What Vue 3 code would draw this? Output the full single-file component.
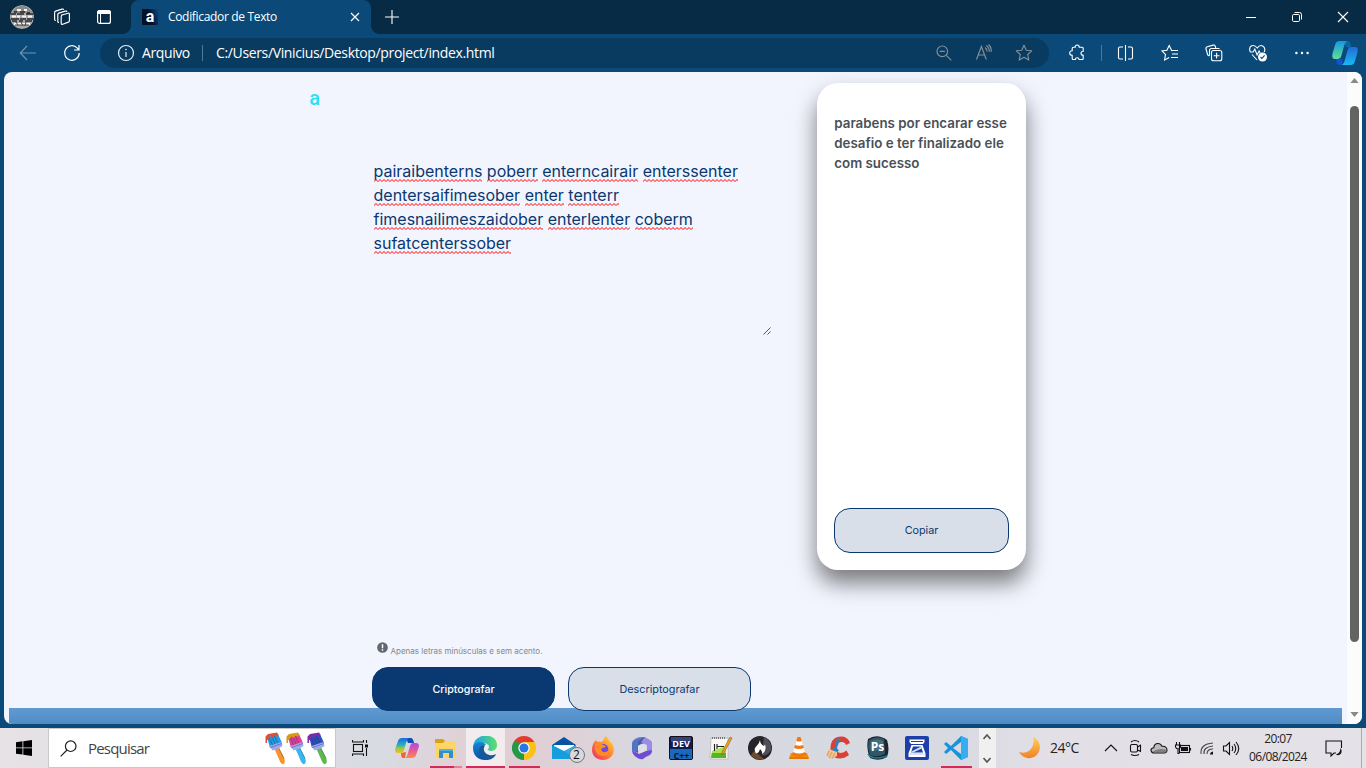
<script setup>
const lines = [
  ['pairaibenterns', 'poberr', 'enterncairair', 'enterssenter'],
  ['dentersaifimesober', 'enter', 'tenterr'],
  ['fimesnailimeszaidober', 'enterlenter', 'coberm'],
  ['sufatcenterssober'],
]
const brushes = [
  { cap: '#dd5038', hair: '#209ee4', stick: '#fb932b' },
  { cap: '#d99b13', hair: '#df3f94', stick: '#36b7f0' },
  { cap: '#7d2aa6', hair: '#2b50bd', stick: '#5db94b' },
]
</script>

<template>
  <div class="screen">
    <header class="tabs">
      <div class="tabs-left">
        <svg class="avatar" viewBox="0 0 24 24" width="24" height="24">
          <circle cx="12" cy="12" r="12" fill="#a9a9a9" />
          <path d="M2 7Q12-6 22 7L20 8H4Z" fill="#8a8a8a" />
          <path d="M1 9h5m1 0h7m2 0h7M4 7h3m3 0h5m2 1h3M1 14h8m1 0h6m1 0h7M2 16h5m2 0h4m2 0h7" stroke="#292929" stroke-width="1.4" />
          <path d="M2 11.5h4m1 0h3m2 0h4m2 0h4M4 19h16M7 5h4m3 0h3" stroke="#f5f5f5" stroke-width="1.8" />
          <path d="M5 20h14M6 17l2 3m3-3 2 4m3-4-1 4" stroke="#444" />
        </svg>
        <svg class="spaces" viewBox="0 0 18 18" width="18" height="18" fill="none" stroke="#fff" stroke-width="1.15" stroke-linejoin="round">
          <path d="M8 7.2 15 5.2q1.4-.3 1.4 1v6.5q0 1-1 1.4l-5.7 2.1q-1.5.5-1.5-1V8.5q0-1 1-1.3" />
          <path d="M6 14.4q-1.2.2-1.2-1V6.5q0-1 1-1.4l6.4-2q1.5-.4 1.6.9" />
          <path d="M2.8 12.3q-1.2.2-1.2-1V4.5q0-1 1-1.4L9 1.1q1.3-.4 1.6.8" />
        </svg>
        <svg class="tabmenu" viewBox="0 0 16 16" width="16" height="16">
          <rect x="1.6" y="1.6" width="12.8" height="12.8" rx="2" fill="none" stroke="#fff" stroke-width="1.2" />
          <path d="M1 4q0-3 3-3h8q3 0 3 3v1H1Z" fill="#fff" /><path d="M4.5 5v9" stroke="#fff" />
        </svg>
      </div>
      <div class="tab">
        <span class="favicon">a</span>
        <span class="tab-title">Codificador de Texto</span>
        <svg viewBox="0 0 10 10" width="10" height="10" stroke="#fff" stroke-width="1.2"><path d="m1 1 8 8M9 1 1 9" /></svg>
      </div>
      <svg class="newtab" viewBox="0 0 14 14" width="14" height="14" stroke="#fff" stroke-width="1.1"><path d="M7 0v14M0 7h14" /></svg>
      <div class="window">
        <svg viewBox="0 0 12 12" stroke="#fff"><path d="M1 6.5h10" /></svg>
        <svg viewBox="0 0 12 12" fill="none" stroke="#fff"><rect x="1.5" y="3.5" width="7" height="7" rx="1.2" /><path d="M3.5 1.5h5q2 0 2 2v5" /></svg>
        <svg viewBox="0 0 12 12" stroke="#fff" stroke-width="1.1"><path d="m1 1 10 10M11 1 1 11" /></svg>
      </div>
    </header>

    <nav class="toolbar">
      <svg class="back" viewBox="0 0 18 18" width="18" height="18" fill="none" stroke="#6c93b0" stroke-width="1.2"><path d="M17 9H1.5M8 2 1.3 9 8 16" /></svg>
      <svg class="reload" viewBox="0 0 18 18" width="18" height="18" fill="none" stroke="#fff" stroke-width="1.2"><path d="M16.2 9A7.3 7.3 0 1 1 14.3 4.1L16 6M16 1v5h-5" /></svg>
      <div class="address">
        <svg viewBox="0 0 18 18" width="18" height="18" fill="none" stroke="#e6eef4" stroke-width="1.2"><circle cx="9" cy="9" r="7.5" /><path d="M9 8v5" /><circle cx="9" cy="5.5" r=".5" fill="#fff" stroke-width=".6" /></svg>
        <span class="scheme">Arquivo</span>
        <i class="rule"></i>
        <span class="url">C:/Users/Vinicius/Desktop/project/index.html</span>
        <div class="address-tools">
          <svg viewBox="0 0 18 18" fill="none" stroke="#829099" stroke-width="1.15"><circle cx="7.3" cy="7.3" r="5.3" /><path d="M4.7 7.3h5.2M11.3 11.3l5 5" /></svg>
          <svg viewBox="0 0 18 18" fill="none" stroke="#829099" stroke-width="1.15"><path d="m1.5 15.5 4.9-13 4.9 13M3.2 11h6.4M10 3.5q2.2 1.2 2 4M11.2 1.5q3.4 2 3 6.3M13.5.5q3.4 3 2.5 7.5" /></svg>
          <svg viewBox="0 0 18 18" fill="none" stroke="#829099" stroke-width="1.15" stroke-linejoin="round"><path d="m9 1.2 2.3 5 5.4.6-4 3.7 1.1 5.6L9 13.3l-4.8 2.8 1.1-5.6-4-3.7 5.4-.6Z" /></svg>
        </div>
      </div>
      <div class="tools">
        <svg viewBox="0 0 18 18"><path d="M5.2 3.2h2q0-2.2 2-2.2t2 2.200h3q1 0 1 1v3q-2.200 0-2.200 2t2.200 2v3.300q0 1-1 1h-3.200q0-1.800-1.800-1.800t-1.800 1.800H5.200q-1 0-1-1v-3.200Q1.700 11.300 1.700 9t2.500-2.200V4.200q0-1 1-1Z" /></svg>
        <i class="rule"></i>
        <svg viewBox="0 0 18 18"><path d="M8.5 1v16M6 3H3Q1.500 3 1.500 4.500v9Q1.500 15 3 15h3m5-12h3q1.500 0 1.500 1.500v9Q15.500 15 14 15h-3" /></svg>
        <svg viewBox="0 0 18 18"><path d="M10.500 6.200 8.200 1.500 5.900 6.200l-5 .7 3.600 3.500L3.600 16l4.600-2.600M10 6.500h7M11 10h6M10 13.500h7" /></svg>
        <svg viewBox="0 0 18 18"><rect x="6.500" y="6.500" width="10.300" height="10.300" rx="2" /><path d="M11.600 8.800v5.700M8.800 11.700h5.700M4.500 11.500Q3 12 2.600 10.500L1 5Q.6 3.200 2.200 2.700l6-1.600q1.500-.4 2 1l.6 2M4.500 11.500v-5q0-2 2-2h8" /></svg>
        <svg viewBox="0 0 18 18"><path d="M1.300 8Q-.4 3.800 2.200 2 5.500.5 8.300 4q2.500-3.500 5.400-2Q17 4 15.200 8M1.200 8h3l1.600-3 2.300 6 2-4 1 2M3 10.500l5 5.500" /><circle cx="13.500" cy="13" r="4.500" fill="#fff" stroke="none" /><path d="m11.500 13 1.400 1.400 2.700-3" stroke="#0b4a78" /></svg>
        <svg viewBox="0 0 18 18"><g fill="#fff" stroke="none"><circle cx="3.400" cy="9" r="1.200" /><circle cx="9" cy="9" r="1.200" /><circle cx="14.600" cy="9" r="1.200" /></g></svg>
      </div>
      <svg class="copilot" viewBox="0 0 24 24" width="26" height="26">
        <defs>
          <linearGradient id="cpa" x2="0" y2="1"><stop stop-color="#1597e4" /><stop offset="1" stop-color="#62df91" /></linearGradient>
          <linearGradient id="cpb" x2="0" y2="1"><stop stop-color="#236bd4" /><stop offset="1" stop-color="#16b9f5" /></linearGradient>
        </defs>
        <path d="M9 1h5q3 0 3 3l1 3h-4Z" fill="#0967a3" />
        <path d="m8 17 2 2-1 4H7q-3 0-3-4l-1-2Z" fill="#1650d6" />
        <path d="M7 1h7q-2 1-3 5L8.500 15q-.7 2.500-3 2.500H2.500q-3 0-2-5L3 4q1-3 4-3Z" fill="url(#cpa)" />
        <path d="M17 23h-8q2-1 3-5l2.500-9q.7-2.500 3-2.500h4q3 0 2 5L21 20q-1 3-4 3Z" fill="url(#cpb)" />
      </svg>
    </nav>

    <main class="viewport">
      <div class="page">
        <section class="editor">
          <div class="logo"><span>a</span></div>
          <div class="textarea">
            <p v-for="(line, i) in lines" :key="i"><template v-for="(w, j) in line" :key="w"><span class="misspelt">{{ w }}</span>{{ j < line.length - 1 ? ' ' : '' }}</template></p>
            <svg class="grip" viewBox="0 0 8 8" width="8" height="8" stroke="#444" stroke-width=".9"><path d="m.5 7.500 7-7M4.500 7.500l3-3" /></svg>
          </div>
          <div class="note">
            <svg viewBox="0 0 12 12" width="11" height="11"><circle cx="6" cy="6" r="5.800" fill="#60676f" /><path d="M6 2.500v4.300M6 8v1.500" stroke="#fff" stroke-width="1.600" /></svg>
            <span>Apenas letras minúsculas e sem acento.</span>
          </div>
          <div class="buttons"><button class="btn primary">Criptografar</button><button class="btn">Descriptografar</button></div>
        </section>
        <aside class="card">
          <p>parabens por encarar esse<br />desafio e ter finalizado ele<br />com sucesso</p>
          <button class="btn">Copiar</button>
        </aside>
        <div class="strip"></div>
      </div>
      <div class="scrollbar">
        <svg viewBox="0 0 10 6" width="9" height="5"><path d="M5 0l5 6H0Z" fill="#898989" /></svg>
        <i class="thumb"></i>
        <svg viewBox="0 0 10 6" width="9" height="5"><path d="M0 0h10L5 6Z" fill="#898989" /></svg>
      </div>
    </main>

    <footer class="taskbar">
      <div class="start"><svg viewBox="0 0 16 16" width="16" height="16"><path d="M0 2.300 6.500 1.300v6.200H0ZM7.300 1.200 16 0v7.500H7.300ZM0 8.300h6.500v6.300L0 13.700ZM7.300 8.300H16V16l-8.700-1.300Z" /></svg></div>
      <div class="search">
        <svg viewBox="0 0 17 17" width="17" height="17" fill="none" stroke="#222" stroke-width="1.200"><circle cx="10.700" cy="6.200" r="5.300" /><path d="m7 10-6.300 6.300" /></svg>
        <span>Pesquisar</span>
        <div class="brushes">
          <svg v-for="b in brushes" :key="b.cap" viewBox="0 0 21 33" width="21" height="33">
            <path d="m9.500 17 4.500-1.500q1 3 4 8 3 6 1 8t-4-2q-3-7-5.500-12.500Z" :fill="b.stick" />
            <path d="m14 16.500 5 10" stroke="#293045" stroke-width=".8" opacity=".45" />
            <path d="m2 5 11-3 4 9-12 5Z" :fill="b.hair" />
            <path d="m4.500 6 3 7m-.5-8 3 7m-.5-8 3 7" stroke="#252b65" stroke-width=".7" opacity=".6" />
            <path d="M.5 11V4.500L3 2l9-1.500 1.500 2.200-2 2-2-1-2 2.200L5.500 4 3 8H2v3Z" :fill="b.cap" />
            <path d="m4.500 14 12-4 1 4-4 2.500-6 2Z" fill="#9ba9ed" /><path d="m5.500 15.500 11.500-4" stroke="#56639f" stroke-width=".7" />
          </svg>
        </div>
      </div>
      <div class="taskview"><svg viewBox="0 0 16 16" width="16" height="16" fill="none" stroke="#111" stroke-width="1.100"><rect x="1.500" y="4.500" width="9" height="7" /><path d="M.5 0v2h11V0M.5 16v-2h11v2M14.500 0v3M14.500 8v8" /><path d="M13 4.500h3v3h-3Z" fill="#111" stroke="none" /></svg></div>

      <div class="apps">
        <div class="app"><svg viewBox="0 0 24 24">
          <defs><linearGradient id="k1" x2="0" y2="1"><stop stop-color="#176be4" /><stop offset=".45" stop-color="#27aebd" /><stop offset=".7" stop-color="#9dc846" /><stop offset="1" stop-color="#f8bd18" /></linearGradient><linearGradient id="k2" x2="0" y2="1"><stop stop-color="#a34de9" /><stop offset=".5" stop-color="#e85998" /><stop offset="1" stop-color="#fb8b4c" /></linearGradient></defs>
          <path d="M11 2h5q2 0 3 5h-6Z" fill="#1549b5" /><path d="m6 17 5-1-1 6H8q-2 0-2-5Z" fill="#f1662f" />
          <path d="M7 2h7q-2 1-3 5l-2 7q-.8 3-3 3H3q-4 0-2.500-5L3 5q1-3 4-3Z" fill="url(#k1)" /><path d="M17 22h-7q2-1 3-5l2-7q.8-3 3-3h3q4 0 2.500 5L21 19q-1 3-4 3Z" fill="url(#k2)" /></svg></div>
        <div class="app run folder"><svg viewBox="0 0 24 24"><path d="M1 3h8l2 2h11v7H1Z" fill="#d9a019" /><path d="M1 7h8l2-2h11v16H1Z" fill="#fed465" /><path d="M5 13h14v9h-4v-5H9v5H5Z" fill="#328dc9" /><path d="M5 13h14v2H5Z" fill="#54b1e6" /></svg></div>
        <div class="app run active"><svg viewBox="0 0 24 24">
          <defs><linearGradient id="e1"><stop stop-color="#16a1ed" /><stop offset="1" stop-color="#5be06a" /></linearGradient><linearGradient id="e2" x2="0" y2="1"><stop stop-color="#1687d1" /><stop offset="1" stop-color="#0c51a2" /></linearGradient></defs>
          <path d="M0 12C0-4 24-4 24 9c0 6-6 7-9 5-1-1 1-1 1-3 0-5-11-5-16 1Z" fill="url(#e1)" /><path d="M0 12c1-7 10-8 13-3-6-1-5 10 1 11 4 1 6-1 9-2C16 28 0 25 0 12Z" fill="url(#e2)" /><path d="M12 9.500c-6-2-9 9-1 14 6 1.500 10-1.500 12-5-8 3-15-3-11-9Z" fill="#145999" /></svg></div>
        <div class="app run chrome"><svg viewBox="0 0 24 24"><path d="M12 12 1.600 6A12 12 0 0 1 22.400 6Z" fill="#e33b2e" /><path d="M12 12 22.400 6A12 12 0 0 1 12 24Z" fill="#fbc116" /><path d="M12 12v12A12 12 0 0 1 1.600 6Z" fill="#279847" /><path d="M12 6h10.400L17 15l-5 9 5-9Z" fill="#fbc116" /><path d="M1.600 6 7 15l5 3V7Z" fill="#279847" /><circle cx="12" cy="12" r="5.700" fill="#fff" /><circle cx="12" cy="12" r="4.500" fill="#2775e7" /></svg></div>
        <div class="app mail"><svg viewBox="0 0 24 24"><path d="M0 9 12 1l12 8v14H0Z" fill="#0754a5" /><path d="M2 9h20v6l-10 4-10-4Z" fill="#fff" /><path d="m0 9 12 6 12-6v14H0Z" fill="#159ddd" /><path d="m12 15 12-6v14Z" fill="#50baf0" opacity=".5" /></svg><b>2</b></div>
        <div class="app"><svg viewBox="0 0 24 24"><defs><linearGradient id="ff" x1="1" x2="0" y2="1"><stop stop-color="#ffe635" /><stop offset=".5" stop-color="#ff8232" /><stop offset="1" stop-color="#ec2571" /></linearGradient></defs><path d="M14 0q4 2 4 5 4 2 5 8c0 15-22 14-22 1 0-4 1-7 4-10l1 2q2-1 4 0 3-1 4-6Z" fill="url(#ff)" /><circle cx="12" cy="13" r="5.300" fill="#7749d7" /><path d="M4 8q4-3 8 1l3 1q-1 2-4 2-2 2 1 4 4 1 6-3 0 8-7 7-8-1-7-12Z" fill="#ff8d24" /></svg></div>
        <div class="app"><svg viewBox="0 0 24 24"><path d="M9 2 14 1l7 4v5l-7-3-6 4v6l-6-3V8q0-4 7-6Z" fill="#465ca6" /><path d="m15 1 7 5v10q0 3-6 5v-5l1-1V9l-6-3Z" fill="#9c8be3" /><path d="m2 14 7 4 7-3 6-1q0 4-5 6l-4 3q-3 1-7-2-4-3-4-7Z" fill="#704ad0" /><path d="M2 13V8q0-5 7-7l5 0-6 5v8l-4 3Z" fill="#587fcf" opacity=".7" /><path d="m12 7.500 4 2.300v4.500l-4 2.300-4-2.300V9.800Z" fill="#dedfe8" /></svg></div>
        <div class="app"><svg viewBox="0 0 24 24"><rect x=".5" y=".5" width="23" height="23" rx="1.500" fill="#101b54" stroke="#111" /><path d="M1 13h22v10H1Z" fill="#1969bd" /><path d="M2 1h20v5H2Z" fill="#38417b" /><text x="12" y="11" text-anchor="middle" class="g dev" fill="#fff">DEV</text><text x="12.500" y="22.500" text-anchor="middle" class="g cpp">C++</text></svg></div>
        <div class="app"><svg viewBox="0 0 24 24"><path d="M2 2h17v21H1Z" fill="#f7f8f2" stroke="#aaa" stroke-width=".6" /><path d="M3 15 17 10v11H2Z" fill="#a8e44c" /><path d="M3 17h14v5H2Z" fill="#54b721" /><path d="M3 2h14" stroke="#777" stroke-width="2" stroke-dasharray="1 1" /><path d="M5.500 8v7M8 8v5m0-2.500h7" stroke="#222" stroke-width="1.100" /><path d="m21 1 2 1-8 15-2 2v-3Z" fill="#eba51f" stroke="#754b17" stroke-width=".5" /></svg></div>
        <div class="app"><svg viewBox="0 0 24 24"><circle cx="12" cy="12" r="12" fill="#272529" /><path d="M16 1a12 12 0 0 1 7 13q-4 7-9 5Z" fill="#505158" /><path d="M3 19q5 6 13 4L6 15Z" fill="#936033" opacity=".65" /><path d="M12 4q0 4 4 6l1-1.500q2 6-2.500 9.500 0-3-2.500-5-1 4-4 4.500-3-4.500 1-8 2.500-2.500 3-5.500Z" fill="#fff" /></svg></div>
        <div class="app"><svg viewBox="0 0 24 24"><path d="m4 17-2 5v1h20v-1l-2-5Z" fill="#f28d12" /><path d="M10.500 1h3L19 19q-7 4-14 0Z" fill="#ef7812" /><path d="m9.300 5-1.200 4q4 1.500 8 0l-1.200-4Q12 6 9.300 5ZM7 12l-1 4q6 3 12 0l-1-4q-5 2-10 0Z" fill="#fff" /><path d="M3 22h18" stroke="#d36500" /></svg></div>
        <div class="app"><svg viewBox="0 0 24 24"><path d="M24 7q-2-6-8-6.500Q7 0 5 8q-2 9 3 13 7 4 15-2l-2.500-4.500q-4 3.500-8 2-3-2-2-7 2-4 6-3.500 3 .5 3.500 3Z" fill="#dc3f35" /><path d="m11 2 3 1-3 9 2 3-6 2-1-4 3-2Z" fill="#2e83bf" /><path d="m3 13 8 3v4l-7 3-4-4Z" fill="#f4c28c" /><path d="m3 15-2 5m5-4-3 6m6-5-3 6" stroke="#a88a65" stroke-width=".600" /></svg></div>
        <div class="app"><svg viewBox="0 0 24 24"><path d="M2 3q9-6 19 1 3 9 0 17-8 5-17 1Q0 14 2 3Z" fill="#20232a" /><path d="M3 4q8-5 15-1l1 15q-8 4-15 1-3-8-1-15Z" fill="#315668" /><path d="M5 5q7-3 12 0l1 8q-6 3-14 0Z" fill="#4f7e8d" opacity=".6" /><path d="M2 18q5 7 19 2" stroke="#187e96" fill="none" stroke-width="1.500" /><text x="11.500" y="14.500" text-anchor="middle" class="g ps" fill="#fff">Ps</text></svg></div>
        <div class="app"><svg viewBox="0 0 24 24"><rect width="24" height="24" rx="2" fill="#1e3fa7" /><path d="M4.500 3.500h15V6L18 8H6L4.500 6Z" fill="#fff" /><path d="M6 5h12v1H6Z" fill="#1e3fa7" /><path d="M6.500 9h11l3 8.500V21h-17v-3.500Z" fill="#fff" /><path d="M8 10.500h8l2 6H6Z" fill="#1e3fa7" /><path d="m16 10.500.8 2L8 16.500H6l.4-1Z" fill="#d5e3f8" /><path d="M4.500 18h15" stroke="#9aaede" stroke-width=".7" /></svg></div>
        <div class="app run code"><svg viewBox="0 0 24 24"><path d="m0 8 2-2 5 4L17 0l7 3v18l-7 3L7 14l-5 4-2-2 4-4Z" fill="#1693dd" /><path d="M17 0v24l7-3V3Z" fill="#36adf0" /><path d="m17 6-8 6 8 6Z" fill="#d8dae2" /></svg></div>
      </div>
      <div class="scroller"><svg viewBox="0 0 8 6" width="8" height="6"><path d="m.5 5 3.500-4 3.500 4" /></svg><svg viewBox="0 0 8 6" width="8" height="6"><path d="m.5 1 3.500 4 3.500-4" /></svg></div>
      <div class="weather"><svg viewBox="0 0 24 24" width="24" height="24"><defs><linearGradient id="mn" x2="0" y2="1"><stop stop-color="#ffd159" /><stop offset="1" stop-color="#f0802a" /></linearGradient></defs><path d="M15 1a11 11 0 1 1-14 15Q8 18 12 14q5-5 3-13Z" fill="url(#mn)" /></svg><span>24°C</span></div>
      <div class="tray">
        <svg viewBox="0 0 18 18"><path d="m3 12 6-6 6 6" /></svg>
        <svg viewBox="0 0 18 18"><rect x="4.500" y="5.500" width="7" height="7.500" rx="1.500" /><path d="m11.500 8 3-1.700v6L11.500 11M5 3q4-3 8 0M5 15.500q4 2 8 0" /></svg>
        <svg viewBox="0 0 18 18"><path d="M4.500 14Q1 14 1 11q0-2 2.800-2.300Q4 4.500 8 4.500q2.600 0 4 2.800Q17 7 17 11q0 3-3 3Z" fill="#bbb" /><path d="M2 13q7-5 15-2v3H5Z" fill="#666" stroke="none" opacity=".7" /></svg>
        <svg viewBox="0 0 18 18"><rect x="5.500" y="6.500" width="10" height="7" /><path d="M7 8h7v4H7Z" fill="#111" stroke="none" /><path d="M16.500 9v2.500M2.500 3v3m3-3v3M1.500 6h5v2q-1 2-2.500 2T1.500 8ZM4 10v4.500h1.500" /></svg>
        <svg viewBox="0 0 18 18"><path d="M3 15Q2 5 15 4M6 15Q5 8 15 7M9 15q0-5 6-5" opacity=".75" /><path d="M12 15.500q0-2.500 3-3v3Z" fill="#111" stroke="none" /></svg>
        <svg viewBox="0 0 18 18"><path d="M1.500 7H4l3.500-3.500v12L4 12H1.500ZM10 7q1.500 2.300 0 5M12 5q3.500 4.300 0 9M14 3q5.500 6.300 0 13" /></svg>
      </div>
      <div class="clock"><span>20:07</span><span class="date">06/08/2024</span></div>
      <svg class="notice" viewBox="0 0 18 18" width="18" height="18" fill="none" stroke="#111" stroke-width="1.100"><path d="M16.500 9V2H1v12h5v3l3-3h2" /><path d="M15.500 9q2.500 4-.5 6.500-2.500 1.800-4-.5 4 0 4.500-6Z" fill="#111" stroke="none" /></svg>
      <i class="edge"></i>
    </footer>
  </div>
</template>

<style>
html, body { margin: 0; overflow: hidden; }
</style>

<style scoped>
* { box-sizing: border-box; }
svg { display: block; flex: none; }
.screen { width: 1366px; height: 768px; overflow: hidden; display: flex; flex-direction: column; background: #0b4a78; font-family: "Open Sans", "Noto Sans", sans-serif; color: #fff; white-space: nowrap; }
.tabs { height: 34px; background: #082b45; display: flex; align-items: center; flex: none; }
.tabs-left { width: 131px; height: 34px; display: flex; align-items: center; padding-left: 10px; }
.spaces { margin-left: 19px; }
.tabmenu { margin-left: 25px; }
.avatar { border-radius: 50%; }
.tab { position: relative; width: 240px; height: 34px; background: #0b4a78; border-radius: 8px 8px 0 0; display: flex; align-items: center; padding: 0 11px; }
.tab::before, .tab::after { content: ''; position: absolute; bottom: 0; width: 8px; height: 8px; }
.tab::before { left: -8px; background: radial-gradient(circle at 0 0, transparent 7.5px, #0b4a78 8px); }
.tab::after { right: -8px; background: radial-gradient(circle at 100% 0, transparent 7.5px, #0b4a78 8px); }
.favicon { width: 16px; height: 16px; background: linear-gradient(70deg, #051123 50%, #07488c); font: bold 16px/15px Roboto, sans-serif; text-align: center; }
.tab-title { font-size: 12px; line-height: 16px; margin-left: 10px; letter-spacing: -.33px; margin-right: auto; padding-bottom: 1px; }
.newtab { margin-left: 14px; }
.window { margin-left: auto; display: flex; gap: 34px; padding-right: 17px; }
.window svg { width: 12px; height: 12px; }
.toolbar { height: 38px; flex: none; display: flex; align-items: center; }
.back { margin-left: 19px; }
.reload { margin-left: 26px; }
.address { margin-left: 19px; width: 949px; height: 30px; border-radius: 15px; background: #093b60; display: flex; align-items: center; padding-left: 17px; font-size: 14px; }
.scheme { margin-left: 7px; width: 49px; letter-spacing: -.4px; padding-bottom: 2px; }
.rule { width: 1px; height: 16px; background: #4d7896; flex: none; }
.address .rule { margin: 0 13px 0 11px; }
.url { letter-spacing: -.36px; padding-bottom: 2px; }
.address-tools { margin-left: auto; display: flex; gap: 22px; padding-right: 16px; }
.address-tools svg { width: 18px; height: 18px; }
.tools { display: flex; align-items: center; margin-left: 19px; }
.tools svg { width: 18px; height: 18px; margin-right: 26px; fill: none; stroke: #fff; stroke-width: 1.1; }
.tools svg:first-child { margin-right: 15px; }
.tools .rule { margin-right: 15px; }
.copilot { margin-left: -5.5px; }
.viewport { margin: 0 4px; height: 652px; flex: none; border-radius: 8px; overflow: hidden; display: flex; background: #f2f5fe; font-family: Inter, sans-serif; }
.page { width: 1343px; height: 652px; display: grid; grid-template-columns: 813px 209px; grid-template-rows: 636px 16px; }
.editor { z-index: 1; display: flex; flex-direction: column; }
.editor > * { flex: none; }
.logo { margin: 14px 0 0 305px; height: 24px; font: 500 21px/24px Roboto, sans-serif; color: #2be0f6; }
.logo span { display: inline-block; transform: scaleX(.95); }
.textarea { position: relative; margin: 49px 0 0 369.5px; width: 397px; height: 177px; color: #0a3871; font-size: 16px; line-height: 24px; }
.textarea p { margin: 0; }
.misspelt { padding-bottom: 1px; background: url("data:image/svg+xml,%3Csvg xmlns='http://www.w3.org/2000/svg' width='4' height='3'%3E%3Cpath d='M-1 3.5 2 .5 5 3.5' fill='none' stroke='%23fb5f66' stroke-width='1.1'/%3E%3C/svg%3E") 0 100% repeat-x; }
.grip { position: absolute; right: 0; bottom: 1px; }
.note { margin: 306px 0 0 373px; height: 15px; display: flex; gap: 2.5px; color: #83878e; font-size: 8px; line-height: 18px; }
.buttons { margin: 10px 0 0 368px; display: flex; gap: 13px; }
.btn { flex: none; width: 183px; height: 44px; border-radius: 16px; border: 1px solid #0a3871; background: #d8dfe8; color: #0a3871; font: 10.8px Inter, sans-serif; padding: 0; }
.btn.primary { background: #0a3871; color: #fff; font-weight: 500; font-size: 10.7px; }
.card { margin-top: 11px; height: 487px; border-radius: 21px; background: #fff; box-shadow: 0 13px 22px rgba(0, 0, 0, .5); padding: 30px 17px 17px; display: flex; flex-direction: column; justify-content: space-between; }
.card p { margin: 0; padding-left: .3px; color: #495057; font-size: 13.33px; font-weight: 600; line-height: 20px; }
.card .btn { width: 175px; height: 45px; padding-bottom: 1px; }
.strip { grid-column: 1 / -1; grid-row: 2; margin: 0 5px; width: 1333px; background: linear-gradient(#609ad2, #4f8cc5); }
.scrollbar { width: 15px; background: #fcfcfc; display: flex; flex-direction: column; align-items: center; padding: 6px 0 7px; }
.thumb { width: 9px; height: 536px; border-radius: 5px; background: #636363; margin: 23px 0 auto; }
.taskbar { margin-top: 4px; height: 40px; flex: none; display: flex; align-items: center; color: #222; background: linear-gradient(90deg, #e6e2e6 0, #d9dbe2 380px, #e0cfd4 480px, #dfd0d5 560px, #d7d8e0 650px, #d8dae2 960px, #e2dfe6 1040px, #e4e1e7); }
.start { width: 48px; padding-left: 16px; }
.search { width: 288px; height: 40px; background: #fff; border: 1px solid #c8c8c8; display: flex; align-items: center; padding-left: 11px; font-size: 15px; color: #444; }
.search span { margin-left: 11px; letter-spacing: -.8px; }
.brushes { margin-left: auto; display: flex; padding-right: 7px; padding-top: 1px; }
.taskview { width: 51px; padding-left: 16px; }
.apps { display: flex; width: 590px; }
.app { position: relative; width: 39.25px; height: 40px; display: grid; place-items: center; }
.app svg { width: 24px; height: 24px; }
.run::after { content: ''; position: absolute; bottom: 0; left: 4px; right: 4px; height: 2px; background: #d02b59; }
.folder::after { background: linear-gradient(90deg, #d02b59 75%, #df8198 75%); }
.active { background: #f2ecef; }
.active::after { left: 0; right: 0; }
.mail b { position: absolute; left: 24.5px; top: 19px; width: 16px; height: 16px; border: 1px solid #777; border-radius: 50%; background: #d9d9dd; font: 12px/14px "Open Sans", sans-serif; text-align: center; color: #111; }
.g { font-family: "Open Sans", sans-serif; font-weight: 700; }
.dev { font-size: 9px; }
.cpp { font-size: 9px; fill: #09152c; }
.ps { font-size: 12px; }
.scroller { width: 17px; margin-left: 1.5px; height: 40px; background: #f0f0f1; display: flex; flex-direction: column; align-items: center; justify-content: space-between; padding: 6px 0 5px; }
.scroller svg { fill: none; stroke: #555; stroke-width: 1.6; }
.weather { margin-left: 22.5px; display: flex; align-items: center; width: 84px; font-size: 14px; gap: 8px; letter-spacing: -.5px; }
.weather span { padding-bottom: 1px; }
.tray { display: flex; gap: 6.1px; }
.tray svg { width: 18px; height: 18px; fill: none; stroke: #111; stroke-width: 1.1; }
.clock { margin-left: 6.5px; width: 62px; font-size: 12px; line-height: 18px; display: flex; flex-direction: column; align-items: center; letter-spacing: -.6px; }
.notice { margin-left: 16px; }
.edge { width: 1px; height: 40px; background: #aaa; margin: 0 4px 0 auto; }
</style>
